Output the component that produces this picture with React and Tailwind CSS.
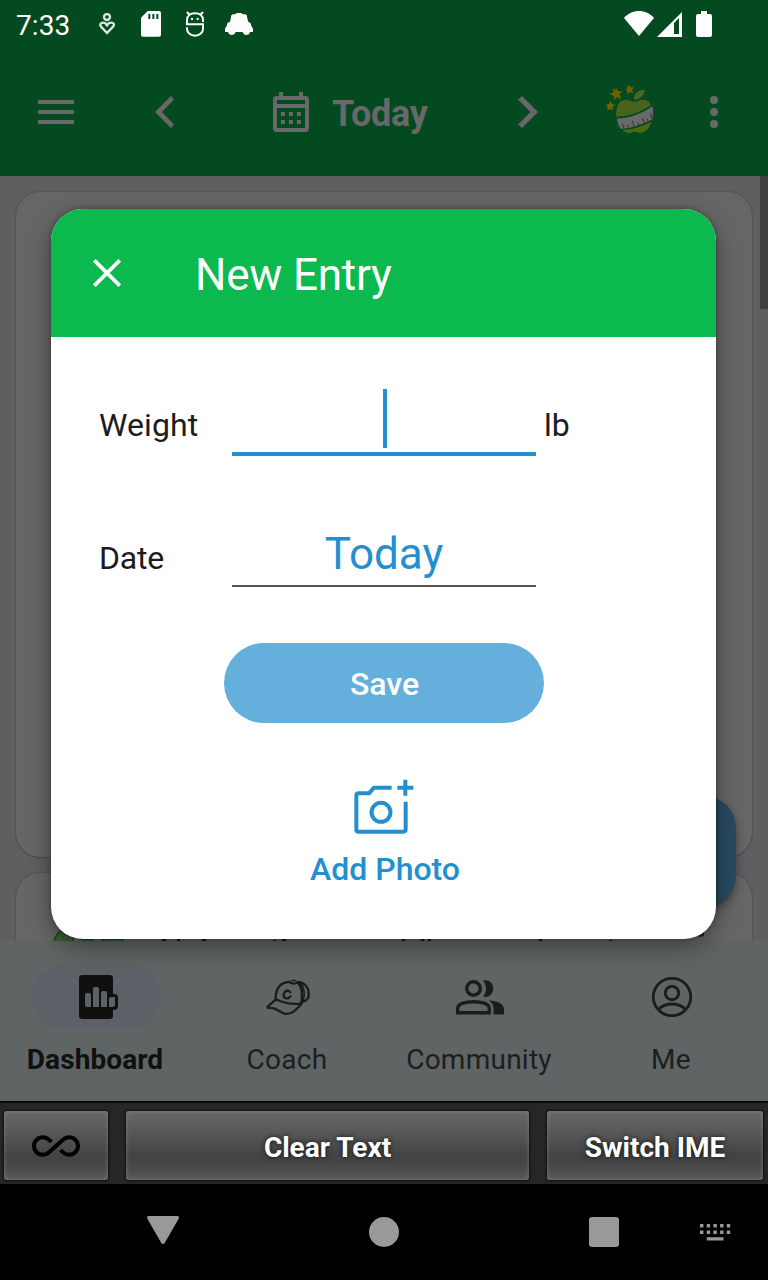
import React from "react";
import { MdAllInclusive } from "react-icons/md";

function StatusBar() {
  return (
    <div className="flex h-12 shrink-0 items-start bg-[#044a20] text-white">
      <span className="ml-4 mt-2.5 w-[55px] text-[28px] leading-8 tracking-[0.1px]">7:33</span>
      <svg className="ml-[28px] mt-[13px] h-[22px] w-4" viewBox="297 39 48 66" fill="none" stroke="#dbe5de" strokeWidth="7">
        <circle cx="321" cy="51" r="9" />
        <path d="M321 99 L303 80 C298 73 303 68 309 68 C315 68 318 71 321 76 C324 71 328 68 334 68 C341 68 345 74 339 80 Z" />
      </svg>
      <svg className="ml-[26px] mt-[11px] h-[26px] w-5" viewBox="423 33 60 78" fill="currentColor">
        <path fillRule="evenodd" d="M443 33h34q6 0 6 6v65q0 6-6 6h-48q-6 0-6-6V53zM445 42v15h6V42zM457 42v15h6V42zM469 42v15h6V42z" />
      </svg>
      <svg className="ml-[25px] mt-[11px] h-[26px] w-[18px]" viewBox="558 33 54 78" fill="none" stroke="currentColor" strokeWidth="6">
        <path d="M609 66V60C609 47 599 40 585 40S561 47 561 60V73H609V86C609 99 598 107 585 107S561 99 561 86V82M568 44L561 36M602 44L609 36" />
        <g fill="currentColor" stroke="none">
          <circle cx="576" cy="57" r="3.5" />
          <circle cx="593" cy="57" r="3.5" />
        </g>
      </svg>
      <svg className="ml-[21px] mt-[13px] h-[22px] w-7" viewBox="675 39 84 66" fill="currentColor">
        <path d="M675 96V86L681 76V71L687 66H690L693 52V47L698 43H705L711 39H723L729 43H737L741 47V52L745 66H747L753 71V76L759 86V96H750C749 102 744 105 739 105S730 102 728 96H707C705 102 700 105 695 105S686 102 684 96Z" />
      </svg>
      <div className="flex-1" />
      <svg className="mt-[11px] h-[25px] w-[30px]" viewBox="0 0 30 25" fill="currentColor">
        <path d="M0 7C8-2.3 22-2.3 30 7L15 25z" />
      </svg>
      <svg className="ml-[3px] mt-[12px] h-[25px] w-[25px]" viewBox="0 0 25 25" fill="currentColor">
        <path fillRule="evenodd" d="M25 0v25H0zM22 6l-5 5v11h5z" />
      </svg>
      <svg className="ml-[14px] mr-14 mt-[11px] h-[26px] w-4" viewBox="0 0 16 26" fill="currentColor">
        <path d="M5 0h6v3h3q2 0 2 2v19q0 2-2 2H2q-2 0-2-2V5q0-2 2-2h3z" />
      </svg>
    </div>
  );
}

function AppleIcon() {
  return (
    <svg className="h-[50px] w-[49px]" viewBox="45 252 147 150">
      <g fill="#6e6100">
        <path d="M79 262l5 12 15-1-11 10 6 15-14-7-6 10-3-14-13-5 13-5-2-12 10 6z" />
        <path d="M118 254l4 8 11-1-7 9 5 10-11-4-7 9-1-12-8-5 9-3-3-10 8 5z" />
        <path d="M61 301l5 10 11 3-9 6 1 11-9-5-9 7 2-12-6-7 10-2z" />
      </g>
      <path fill="#4f6322" d="M132 300C131 279 143 269 165 270C162 288 150 298 132 300Z" />
      <path fill="#49631d" d="M79 350C77 318 87 300 106 299C117 299 124 305 133 305C144 305 148 298 160 299C173 300 180 306 183 315C154 337 116 349 79 350Z" />
      <path fill="#696969" d="M81 356C120 354 156 342 187 319C190 332 190 345 187 358C158 373 128 384 93 387C86 378 82 367 81 356Z" />
      <path fill="#4e6816" d="M98 390C129 388 157 380 184 365C180 382 167 397 153 398C145 399 140 395 134 395C126 395 122 400 114 399C107 398 101 394 98 390Z" />
      <path fill="none" stroke="#323232" strokeWidth="3" d="M97 370l5 16M112 374l3 9M127 362l5 18M143 367l3 9M157 354l6 17M171 356l3 8M181 340l5 16" />
    </svg>
  );
}

function Toolbar() {
  return (
    <header className="flex h-32 shrink-0 items-center bg-[#044a20] text-[#686868]">
      <div className="ml-[38px] flex w-9 flex-col gap-1.5">
        <div className="h-1 bg-[#686868]" />
        <div className="h-1 bg-[#686868]" />
        <div className="h-1 bg-[#686868]" />
      </div>
      <svg className="ml-[81px] h-8 w-[19px]" viewBox="0 0 19 32" fill="currentColor">
        <path d="M16 0l3 3.5L7 16l12 12.500-3 3.500L0 16z" />
      </svg>
      <svg className="ml-[99px] h-10 w-9" viewBox="0 0 36 40" fill="currentColor">
        <path fillRule="evenodd" d="M6 0h4v4h16V0h4v4h2q4 0 4 4v28q0 4-4 4H4q-4 0-4-4V8q0-4 4-4h2zM4 8v4h28V8zM4 16v20h28V16z" />
        <path d="M8 20h4v4H8zM16 20h4v4h-4zM24 20h4v4h-4zM8 28h4v4H8zM16 28h4v4h-4zM24 28h4v4h-4z" />
      </svg>
      <span className="ml-[23px] mt-1 w-[96px] text-[36px] font-bold leading-10 tracking-[-0.3px]">Today</span>
      <svg className="ml-[90px] h-8 w-5" viewBox="0 0 20 32" fill="currentColor">
        <path d="M4 0L0 3.500 12.500 16 0 28.500 4 32 20 16z" />
      </svg>
      <div className="mb-1.5 ml-[67px]">
        <AppleIcon />
      </div>
      <div className="ml-14 flex flex-col gap-1">
        <div className="size-2 rounded-full bg-[#686868]" />
        <div className="size-2 rounded-full bg-[#686868]" />
        <div className="size-2 rounded-full bg-[#686868]" />
      </div>
    </header>
  );
}

function Content() {
  return (
    <main className="relative h-[765px] shrink-0 overflow-hidden bg-[#5f5f61] px-4 pt-4">
      <div className="h-[665px] rounded-3xl bg-[#666] shadow-[0_0_2px_rgba(0,0,0,0.35),0_1px_1px_rgba(0,0,0,0.15)]" />
      <div className="mt-4 h-[120px] rounded-3xl bg-[#666] shadow-[0_0_2px_rgba(0,0,0,0.4)]">
        <svg className="h-[68px] w-[736px]" viewBox="16 873 736 68">
          <g fill="#3b5f35" stroke="#1b4a20" strokeWidth="1.500">
            <path d="M53 945Q56 928 73 925V945zM82 945V939h11v6zM102 945V939h21v6z" />
          </g>
          <path fill="#161722" d="M162 939h4v2h-4zM177 939h3v2h-3zM202 939h4v2h-4zM273 940h3v1h-3zM282 939h4v2h-4zM402 939h3v2h-3zM421 939h3v2h-3zM428 939h3v2h-3zM539 939h3v2h-3zM609 940h3v1h-3z" />
          <path fill="#222" d="M697 936l7-4v4l-4 1z" />
        </svg>
      </div>
      <div className="absolute right-0 top-0 h-[133px] w-2 bg-[#404040]" />
      <div className="absolute right-8 top-[620px] h-28 w-28 rounded-[32px] bg-[#284a5e] shadow-[0_4px_10px_rgba(0,0,0,0.35)]" />
    </main>
  );
}

function CapIcon() {
  return (
    <svg className="h-[38px] w-[44px]" viewBox="76 175 133 112" fill="none" stroke="#1c1c1e" strokeWidth="7" strokeLinejoin="round" strokeLinecap="round">
      <path d="M105 238C105 205 117 187 146 185Q160 196 173 185C194 188 206 203 205 222C206 238 198 243 187 245" />
      <path d="M172 187C187 202 187 222 183 249" />
      <path strokeWidth="5" d="M181 190C192 204 194 224 188 243" />
      <path d="M106 238L81 260C79 263 82 264 88 264C107 263 117 277 132 281C154 286 168 269 184 251C157 254 126 248 106 238Z" />
      <path strokeWidth="5" d="M155 181H164" />
      <path d="M150 217C145 210 136 211 132 217S127 233 137 235C143 236 148 233 150 229" />
    </svg>
  );
}

function DashboardIcon() {
  return (
    <svg className="ml-[5px] h-11 w-[39px]" viewBox="237 585 117 132">
      <path fill="#101010" d="M247 585h82q10 0 10 10v47h4q11 0 11 12v24q0 12-15 12v17q0 10-10 10h-82q-10 0-10-10V595q0-10 10-10z" />
      <path fill="#5b6167" d="M255 645q0-6 6-6h6q6 0 6 6v36h-12q-6 0-6-6zM279 627q0-6 6-6h6q6 0 6 6v54h-18zM303 639q0-6 6-6h6q6 0 6 6v42h-18zM327 657q0-6 6-6h12v24q0 6-6 6h-12z" />
    </svg>
  );
}

function CommunityIcon() {
  return (
    <svg className="h-[35px] w-12" viewBox="0 0 48 35" fill="#1c1c1e">
      <circle cx="17.500" cy="8.500" r="6.800" fill="none" stroke="#1c1c1e" strokeWidth="3.400" />
      <path fill="none" stroke="#1c1c1e" strokeWidth="3.400" d="M1.700 32.800V28.500C1.700 23.500 10 21.700 17.500 21.700S33.300 23.500 33.300 28.500V32.800Z" />
      <path d="M27 .4C33 -.8 37.200 3 37.200 8.500S33 18 27 16.600C31 12 31 5 27 .4ZM32.500 20.200C42 21 48 24 48 29V34.500H37.500V29C37.500 25 36 22.500 32.500 20.200Z" />
    </svg>
  );
}

function MeIcon() {
  return (
    <svg className="size-[42px]" viewBox="0 0 42 42" fill="none" stroke="#1c1c1e" strokeWidth="2.800">
      <circle cx="21" cy="21" r="18.700" />
      <circle cx="21" cy="17" r="6.700" />
      <path d="M7 33.500Q13 28 21 28T35 33.500" />
    </svg>
  );
}

function NavItem({ label, active, children }) {
  return (
    <div className="flex w-48 flex-col items-center pt-6">
      <div className={active ? "flex h-16 w-32 items-center justify-center rounded-full bg-[#5b6167]" : "flex h-16 w-32 items-center justify-center"}>
        {children}
      </div>
      <span className={active ? "mt-[13px] -ml-0.5 text-[28px] font-bold leading-9 tracking-[0.1px] text-[#101010]" : "mt-[13px] -ml-0.5 text-[28px] leading-9 tracking-[0.25px] text-[#1e1e20]"}>
        {label}
      </span>
    </div>
  );
}

function BottomNav() {
  return (
    <nav className="flex h-40 shrink-0 bg-[#5f6464]">
      <NavItem label="Dashboard" active><DashboardIcon /></NavItem>
      <NavItem label="Coach"><CapIcon /></NavItem>
      <NavItem label="Community"><CommunityIcon /></NavItem>
      <NavItem label="Me"><MeIcon /></NavItem>
    </nav>
  );
}

const keyClass =
  "flex h-[69px] items-center justify-center rounded-[3px] bg-[linear-gradient(to_bottom,#686868_0%,#555_35%,#434343_65%,#454545_75%,#585858_100%)] text-[28px] font-bold text-white shadow-[inset_0_0_4px_rgba(150,150,150,0.6),0_0_2px_1px_rgba(0,0,0,0.6)] [text-shadow:0_0_5px_rgba(0,0,0,0.8)]";

function Keyboard() {
  return (
    <div className="flex h-[83px] shrink-0 border-t-2 border-[#0c0c0c] bg-[#262626] pl-1 pt-2">
      <div className={keyClass + " w-[104px] !text-black"}>
        <MdAllInclusive size={48} />
      </div>
      <div className={keyClass + " ml-[18px] w-[403px] pt-1"}>Clear Text</div>
      <div className={keyClass + " ml-[18px] w-[216px] pt-1"}>Switch IME</div>
    </div>
  );
}

function SystemNav() {
  return (
    <div className="flex h-24 shrink-0 items-start bg-black text-[#999]">
      <svg className="ml-[147px] mt-8 h-7 w-8" viewBox="0 0 32 28" fill="currentColor">
        <path d="M2 0h28q3 0 1.500 3L18 26.500q-2 3-4 0L.5 3Q-1 0 2 0z" />
      </svg>
      <div className="ml-[190px] mt-[33px] size-[30px] rounded-full bg-[#999]" />
      <div className="ml-[190px] mt-[33px] size-[30px] rounded-[3px] bg-[#999]" />
      <svg className="ml-[81px] mt-[39px] h-[18px] w-[31px]" viewBox="0 0 31 18" fill="currentColor">
        <path d="M0 1h3.400v3.400H0zM6.700 1h3.400v3.400H6.700zM13.400 1h3.400v3.400h-3.400zM20.100 1h3.400v3.400h-3.400zM26.800 1h3.400v3.400h-3.400zM0 7.500h3.400v3.400H0zM6.700 7.500h3.400v3.400H6.700zM13.400 7.500h3.400v3.400h-3.400zM20.100 7.500h3.400v3.400h-3.400zM26.800 7.500h3.400v3.400h-3.400zM6.700 14.200h16.800v3.200H6.700z" />
      </svg>
    </div>
  );
}

function EntryDialog() {
  return (
    <section className="absolute left-[51px] top-[209px] flex h-[730px] w-[665px] flex-col overflow-hidden rounded-[32px] bg-white text-[32px] text-[#1c1c1c] shadow-[0_8px_24px_rgba(0,0,0,0.35),0_0_5px_rgba(0,0,0,0.35)]">
      <div className="flex h-32 shrink-0 items-center bg-[#0bb94f] text-white">
        <svg className="ml-[42px] size-7" viewBox="0 0 28 28" fill="none" stroke="currentColor" strokeWidth="3.800">
          <path d="M1.300 1.300L26.700 26.700M26.700 1.300L1.300 26.700" />
        </svg>
        <h1 className="ml-[74px] mt-1 text-[44px] leading-[52px] tracking-[-0.2px]">New Entry</h1>
      </div>
      <div className="flex h-[119px] items-end pl-12">
        <span className="mb-[11px] w-[133px] leading-10 tracking-[0.1px]">Weight</span>
        <div className="flex h-[67px] w-[304px] justify-center border-b-4 border-[#248fd0]">
          <div className="h-[59px] w-1 translate-x-px bg-[#248fd0]" />
        </div>
        <span className="mb-[11px] ml-2 leading-10">lb</span>
      </div>
      <div className="flex h-[131px] items-end pl-12">
        <span className="mb-[9px] w-[133px] leading-10 tracking-[-0.2px]">Date</span>
        <div className="w-[304px] border-b-2 border-[#555] pb-[5px] text-center text-[44px] leading-[52px] text-[#248fd0]">Today</div>
      </div>
      <button className="ml-[173px] mt-14 h-20 w-80 rounded-full bg-[#65afdd] pl-px pt-0.5 font-medium text-white">Save</button>
      <div className="mt-14 flex flex-col text-[#248fd0]">
        <svg className="ml-[303px] h-[55px] w-[60px]" viewBox="162 27 180 165" fill="none" stroke="currentColor" strokeWidth="12">
          <path strokeLinejoin="round" d="M275 53H222L207 70H176Q169 70 169 77V179Q169 185 176 185H310Q317 185 317 178V95" />
          <circle cx="243" cy="127" r="28.500" />
          <path d="M316 29V77M292 53H340" />
        </svg>
        <span className="mt-[15px] w-[668px] text-center font-medium leading-10">Add Photo</span>
      </div>
    </section>
  );
}

export default function App() {
  return (
    <div className="relative flex h-[1280px] w-[768px] flex-col overflow-hidden bg-black font-[Roboto,sans-serif]">
      <StatusBar />
      <Toolbar />
      <Content />
      <BottomNav />
      <Keyboard />
      <SystemNav />
      <EntryDialog />
    </div>
  );
}
